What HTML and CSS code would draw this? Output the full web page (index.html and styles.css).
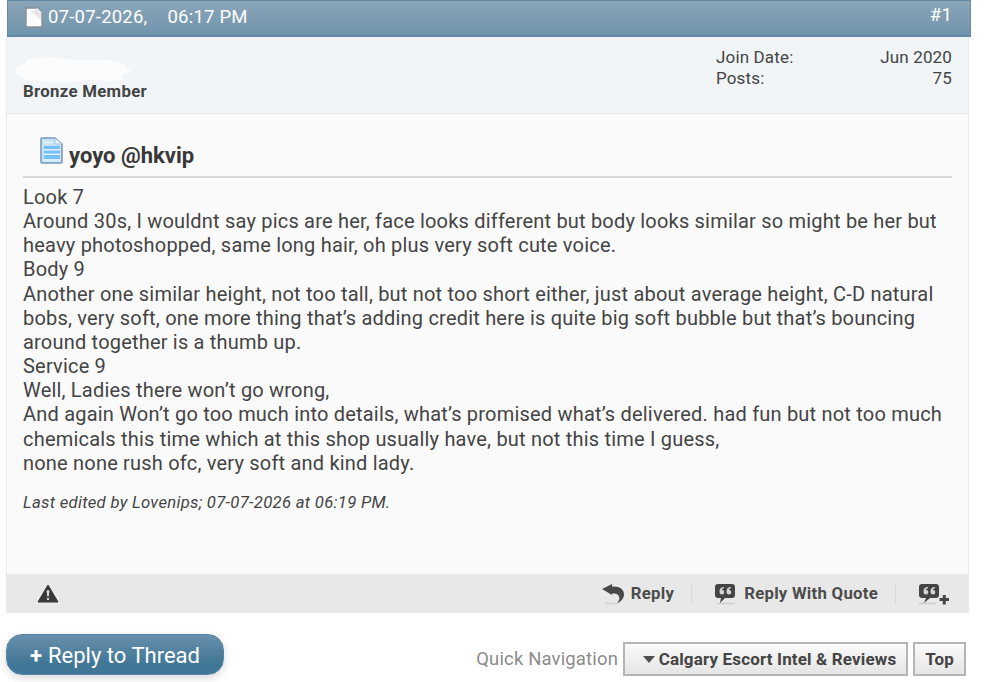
FILE: index.html
```
<!DOCTYPE html>
<html lang="en">
<head>
    <meta charset="UTF-8">
    <meta name="viewport" content="width=device-width, initial-scale=1.0">
    <title>yoyo @hkvip</title>
    <link rel="stylesheet" href="styles.css">
</head>
<body>
    <div class="post">
        <div class="posthead">
            <svg class="icon-page" width="18" height="21" viewBox="0 0 18 21">
                <path d="M1 1h11l5 5v14H1z" fill="#fcfcfc" stroke="#8a8d90" stroke-width="1.4"/>
                <path d="M6 5l6-3.500 4 4.500v7z" fill="#e9e9e9"/>
                <path d="M12 1v5h5" fill="#fff" stroke="#d5d5d5" stroke-width=".7"/>
            </svg>
            <span class="date">07-07-2026,</span>
            <span class="time">06:17 PM</span>
            <a class="postcounter">#1</a>
        </div>
        <div class="userinfo">
            <div class="user">
                <svg class="username" width="120" height="27" viewBox="0 0 120 27">
                    <path d="M14 2C24-1 40 0 58 3c18 0 36-1 46 2 6 2 8 4 7 7 5 0 6 4 1 5-3 1-5 1-5 3 3 2 1 4-5 4-18-1-35-1-48 1-12 2-23 0-31-2C9 24 1 19 0 13 2 8 8 8 12 6c-1-2 0-3 2-4z" fill="#fcfcfc"/>
                </svg>
                <span class="usertitle">Bronze Member</span>
            </div>
            <dl class="stats">
                <dt>Join Date:</dt>
                <dd>Jun 2020</dd>
                <dt>Posts:</dt>
                <dd>75</dd>
            </dl>
        </div>
        <div class="postbody">
            <h2 class="title">
                <svg class="icon-doc" width="23" height="27" viewBox="0 0 23 27">
                    <path d="M1 2q0-1 1-1h13l7 6v18q0 1-1 1H2q-1 0-1-1z" fill="#c7e3f8" stroke="#7698b8" stroke-width="1.500"/>
                    <path d="M15 1v6h7z" fill="#edf7ff" stroke="#8fb4d5" stroke-width=".8"/>
                    <path d="M4 9h16v3H4zM4 13.500h16v3H4zM4 18h16v4H4z" fill="#73bff6"/>
                    <path d="M4 5.500h9" stroke="#f4fbff" stroke-width="1.500" stroke-dasharray="2 1"/>
                    <path d="M4 12.800h16M4 17.300h16M4 23h16" stroke="#e9f6ff"/>
                </svg>
                <span class="title-text">yoyo @hkvip</span>
            </h2>
            <div class="content">
                Look 7<br>
                Around 30s, I wouldnt say pics are her, face looks different but body looks similar so might be her but<br>
                heavy photoshopped, same long hair, oh plus very soft cute voice.<br>
                Body 9<br>
                Another one similar height, not too tall, but not too short either, just about average height, C-D natural<br>
                bobs, very soft, one more thing that’s adding credit here is quite big soft bubble but that’s bouncing<br>
                around together is a thumb up.<br>
                Service 9<br>
                Well, Ladies there won’t go wrong,<br>
                And again Won’t go too much into details, what’s promised what’s delivered. had fun but not too much<br>
                chemicals this time which at this shop usually have, but not this time I guess,<br>
                none none rush ofc, very soft and kind lady.
            </div>
            <p class="lastedited">Last edited by Lovenips; 07-07-2026 at 06:19 PM.</p>
        </div>
        <div class="postfoot">
            <svg class="icon-report" width="22" height="19" viewBox="0 0 22 19">
                <path d="M11 1l10 17H1z" fill="#383838" stroke="#383838" stroke-linejoin="round"/>
                <path d="M9.500 7q1.500-2 3 0l-.8 5.500h-1.400z" fill="#d8d8d8"/>
                <circle cx="11" cy="15" r="1.200" fill="#d8d8d8"/>
            </svg>
            <a class="control reply">
                <svg width="24" height="22" viewBox="0 0 24 22">
                    <path d="M4 20.500h11" stroke="#d2d2d2" stroke-width="1.500"/>
                    <path d="M1 6l10-5v2.500c8-.5 12 3 12 8 0 4-3 7-7 9 2-3 3-5 2-7-1-2.500-3-3-7-3V12z" fill="#484848"/>
                </svg>
                <span>Reply</span>
            </a>
            <a class="control quote">
                <svg width="22" height="22" viewBox="0 0 22 22">
                    <path d="M3 20.500h18" stroke="#cecece" stroke-width="1.500"/>
                    <path d="M4 1h14q3 0 3 3v8q0 3-3 3h-7l-5 5 1-5H4q-3 0-3-3V4q0-3 3-3z" fill="#444"/>
                    <path d="M10 4Q5.500 4 5.500 8.500q0 3 2.500 3 2.300 0 2.300-2.200T8 7q.2-1.700 2-2zM17 4q-4.500 0-4.500 4.500 0 3 2.500 3 2.300 0 2.300-2.200T15 7q.2-1.700 2-2z" fill="#d4d4d4"/>
                </svg>
                <span>Reply With Quote</span>
            </a>
            <a class="control multiquote">
                <svg width="32" height="22" viewBox="0 0 32 22">
                    <path d="M1 20.500h17" stroke="#cecece" stroke-width="1.500"/>
                    <path d="M4 1h14q3 0 3 3v8q0 3-3 3h-6l-6 5 2-5H4q-3 0-3-3V4q0-3 3-3z" fill="#444"/>
                    <path d="M10 4Q5.500 4 5.500 8.500q0 3 2.500 3 2.300 0 2.300-2.200T8 7q.2-1.700 2-2zM17 4q-4.500 0-4.500 4.500 0 3 2.500 3 2.300 0 2.300-2.200T15 7q.2-1.700 2-2z" fill="#d4d4d4"/>
                    <path d="M21.500 16.500h9.500M26.300 12v9.500" stroke="#484848" stroke-width="3"/>
                </svg>
            </a>
        </div>
    </div>

    <div class="below">
        <a class="newreply"><b>+</b> <span>Reply to Thread</span></a>
        <div class="navpopup">
            <span class="label">Quick Navigation</span>
            <a class="btn forum">
                <svg width="12" height="8" viewBox="0 0 12 8">
                    <path d="M0 1h12L6 8z" fill="#505050"/>
                </svg>
                <span>Calgary Escort Intel &amp; Reviews</span>
            </a>
            <a class="btn top"><span>Top</span></a>
        </div>
    </div>
</body>
</html>
```
FILE: styles.css
```
* {
    box-sizing: border-box;
}
body {
    min-height: 682px;
    margin: 0;
    background: #fff;
    font-family: Roboto, sans-serif;
    color: #444;
    overflow: hidden;
}
.post {
    width: 965px;
    margin-left: 6px;
}
.posthead {
    display: flex;
    align-items: center;
    width: 964px;
    height: 37px;
    margin-left: 1px;
    padding: 0 18px 2px 17px;
    border: 1px solid #628ba7;
    border-bottom-width: 2px;
    background: linear-gradient(#8ba5b8, #7094ad);
    color: #fff;
    font-size: 18.500px;
    letter-spacing: 0.22px;
    white-space: nowrap;
}
.date {
    margin-left: 5px;
}
.time {
    margin-left: 20px;
}
.postcounter {
    margin: -5px 0 0 auto;
}
.userinfo {
    display: flex;
    justify-content: space-between;
    width: 963px;
    height: 77px;
    padding: 10px 16px 0 16px;
    border: 1px solid #e6eaec;
    border-top: none;
    background: #f1f5f8;
}
.user {
    display: flex;
    flex-direction: column;
}
.username {
    margin: 10px 0 0 -8px;
}
.usertitle {
    margin-top: -3px;
    font-size: 16.800px;
    font-weight: bold;
    letter-spacing: 0.3px;
    line-height: 20px;
}
.stats {
    display: grid;
    grid-template-columns: auto auto;
    justify-content: space-between;
    align-content: start;
    width: 236px;
    margin: 0;
    font-size: 17px;
    letter-spacing: 0.15px;
    line-height: 21px;
}
.stats dd {
    margin: 0;
    text-align: right;
}
.postbody {
    width: 963px;
    height: 460px;
    padding: 21px 16px 0;
    border: 1px solid #ebebeb;
    border-top: none;
    border-bottom: none;
    background: #fafafa;
}
.title {
    display: flex;
    height: 43px;
    margin: 0;
    padding-left: 17px;
    border-bottom: 2px solid #d8d8d8;
    color: #383838;
    font-size: 22px;
    line-height: 41px;
}
.icon-doc {
    margin: 2px 6px 0 0;
}
.content {
    margin-top: 7px;
    font-size: 20px;
    letter-spacing: 0.2px;
    line-height: 24.150px;
    white-space: nowrap;
}
.lastedited {
    margin: 18px 0 0;
    font-size: 16.700px;
    font-style: italic;
    letter-spacing: 0.28px;
    line-height: 20px;
}
.postfoot {
    display: flex;
    align-items: center;
    width: 963px;
    height: 39px;
    padding: 0 19px 0 31px;
    background: #e8e8e8;
}
.control {
    display: flex;
    align-items: center;
    height: 22px;
    color: #4c4c4c;
    font-size: 16.800px;
    font-weight: bold;
    letter-spacing: 0.25px;
    white-space: nowrap;
}
.control span {
    padding-bottom: 2px;
}
.reply {
    gap: 6px;
    margin-left: auto;
    padding-right: 17px;
}
.quote {
    gap: 8px;
    padding: 0 17px 0 22px;
}
.reply,
.quote {
    border-right: 1px solid #d9d9d9;
}
.multiquote {
    padding-left: 22px;
}
.below {
    display: flex;
    justify-content: space-between;
    width: 960px;
    margin: 21px 0 0 6px;
}
.newreply {
    display: flex;
    align-items: center;
    justify-content: center;
    gap: 6px;
    width: 218px;
    height: 41px;
    padding-top: 1px;
    border: 1px solid #5486a5;
    border-radius: 16px;
    background: linear-gradient(#6890ac, #407696 75%);
    box-shadow: 0 3px 9px rgba(0, 0, 0, 0.15);
    color: #fff;
    font-size: 22px;
    white-space: nowrap;
}
.navpopup {
    display: flex;
    align-items: center;
    gap: 5px;
    height: 34px;
    margin-top: 8px;
    white-space: nowrap;
}
.label {
    color: #8b8b8b;
    font-size: 18.500px;
    letter-spacing: 0.15px;
}
.btn {
    display: flex;
    align-items: center;
    justify-content: center;
    height: 34px;
    border: 2px solid #b5b5b5;
    background: linear-gradient(#fafafa, #e5e5e5);
    font-size: 17px;
    font-weight: bold;
    letter-spacing: 0.15px;
}
.forum {
    gap: 4px;
    width: 285px;
    padding-left: 8px;
}
.top {
    width: 53px;
}
```
